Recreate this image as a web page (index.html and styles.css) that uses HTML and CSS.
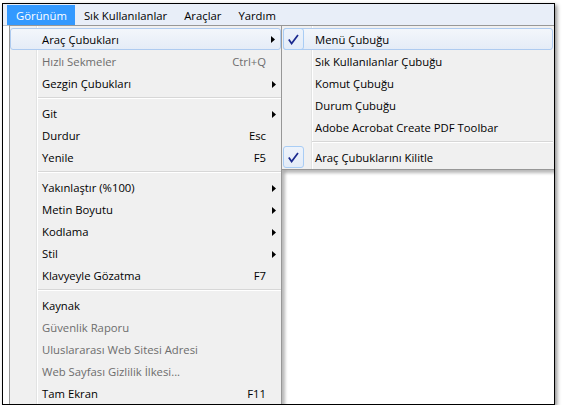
FILE: index.html
```html
<!DOCTYPE html>
<html lang="tr">
<head>
<meta charset="utf-8">
<title>Görünüm menüsü</title>
<link rel="stylesheet" href="styles.css">
</head>
<body>
<div class="window">
  <div class="menubar">
    <span class="mb-item active">Görünüm</span>
    <span class="mb-item">Sık Kullanılanlar</span>
    <span class="mb-item">Araçlar</span>
    <span class="mb-item">Yardım</span>
  </div>
  <div class="page"></div>

  <div class="menu main-menu">
    <div class="item hot"><span class="label">Araç Çubukları</span><span class="key"></span><span class="sub"><svg width="4" height="7" viewBox="0 0 4 7"><path d="M0 0L4 3.5L0 7Z"/></svg></span></div>
    <div class="item disabled"><span class="label">Hızlı Sekmeler</span><span class="key">Ctrl+Q</span><span class="sub"></span></div>
    <div class="item"><span class="label">Gezgin Çubukları</span><span class="key"></span><span class="sub"><svg width="4" height="7" viewBox="0 0 4 7"><path d="M0 0L4 3.5L0 7Z"/></svg></span></div>
    <div class="sep"></div>
    <div class="item"><span class="label">Git</span><span class="key"></span><span class="sub"><svg width="4" height="7" viewBox="0 0 4 7"><path d="M0 0L4 3.5L0 7Z"/></svg></span></div>
    <div class="item"><span class="label">Durdur</span><span class="key">Esc</span><span class="sub"></span></div>
    <div class="item"><span class="label">Yenile</span><span class="key">F5</span><span class="sub"></span></div>
    <div class="sep"></div>
    <div class="item"><span class="label">Yakınlaştır (%100)</span><span class="key"></span><span class="sub"><svg width="4" height="7" viewBox="0 0 4 7"><path d="M0 0L4 3.5L0 7Z"/></svg></span></div>
    <div class="item"><span class="label">Metin Boyutu</span><span class="key"></span><span class="sub"><svg width="4" height="7" viewBox="0 0 4 7"><path d="M0 0L4 3.5L0 7Z"/></svg></span></div>
    <div class="item"><span class="label">Kodlama</span><span class="key"></span><span class="sub"><svg width="4" height="7" viewBox="0 0 4 7"><path d="M0 0L4 3.5L0 7Z"/></svg></span></div>
    <div class="item"><span class="label">Stil</span><span class="key"></span><span class="sub"><svg width="4" height="7" viewBox="0 0 4 7"><path d="M0 0L4 3.5L0 7Z"/></svg></span></div>
    <div class="item"><span class="label">Klavyeyle Gözatma</span><span class="key">F7</span><span class="sub"></span></div>
    <div class="sep"></div>
    <div class="item"><span class="label">Kaynak</span><span class="key"></span><span class="sub"></span></div>
    <div class="item disabled"><span class="label">Güvenlik Raporu</span><span class="key"></span><span class="sub"></span></div>
    <div class="item disabled"><span class="label">Uluslararası Web Sitesi Adresi</span><span class="key"></span><span class="sub"></span></div>
    <div class="item disabled"><span class="label">Web Sayfası Gizlilik İlkesi...</span><span class="key"></span><span class="sub"></span></div>
    <div class="item"><span class="label">Tam Ekran</span><span class="key">F11</span><span class="sub"></span></div>
  </div>

  <div class="menu sub-menu">
    <div class="item hot"><span class="check"><svg width="11" height="11" viewBox="0 0 11 11"><path d="M0.8 5.6L3.6 9.6L10 0.9" fill="none" stroke="#1b2a8f" stroke-width="1.7" stroke-linejoin="miter"/></svg></span><span class="label">Menü Çubuğu</span></div>
    <div class="item"><span class="label">Sık Kullanılanlar Çubuğu</span></div>
    <div class="item"><span class="label">Komut Çubuğu</span></div>
    <div class="item"><span class="label">Durum Çubuğu</span></div>
    <div class="item"><span class="label">Adobe Acrobat Create PDF Toolbar</span></div>
    <div class="sep"></div>
    <div class="item"><span class="check"><svg width="11" height="11" viewBox="0 0 11 11"><path d="M0.8 5.6L3.6 9.6L10 0.9" fill="none" stroke="#1b2a8f" stroke-width="1.7" stroke-linejoin="miter"/></svg></span><span class="label">Araç Çubuklarını Kilitle</span></div>
  </div>
</div>
</body>
</html>
```

FILE: styles.css
```css
html, body {
  margin: 0;
  padding: 0;
  background: #ffffff;
}

body {
  font-family: "Open Sans", "Noto Sans", "DejaVu Sans", sans-serif;
  font-size: 11.3px;
  color: #000;
}

.window {
  position: relative;
  margin: 3px 0 0 2px;
  width: 551px;
  height: 400px;
  border: 1px solid #000;
  box-shadow: 2px 2px 4px rgba(0, 0, 0, 0.45);
  background: #fff;
  display: flex;
  flex-direction: column;
  overflow: hidden;
}

.menubar {
  display: flex;
  align-items: stretch;
  height: 20px;
  padding: 1px 0 0 4px;
  background: #e8eef8;
  border-bottom: 1px solid #bcc3cd;
}

.mb-item {
  display: flex;
  align-items: center;
  padding: 0 8px 0 9px;
  line-height: 19px;
}

.mb-item.active {
  background: #3399ff;
  color: #fff;
}

.page {
  flex: 1;
  background: #fff;
}

.menu {
  position: absolute;
  background-color: #f0f0f0;
  border: 1px solid #979797;
  box-shadow: 3px 3px 3px rgba(0, 0, 0, 0.28);
}

.main-menu {
  left: 6px;
  top: 21px;
  width: 271px;
  padding: 2px 0 20px;
  background-image: linear-gradient(to right, transparent 26px, #e2e3e3 26px, #e2e3e3 27px, #ffffff 27px, #ffffff 28px, transparent 28px);
}

.sub-menu {
  left: 278px;
  top: 21px;
  width: 272px;
  padding: 2px 0 1px;
  background-image: linear-gradient(to right, transparent 29px, #e2e3e3 29px, #e2e3e3 30px, #ffffff 30px, #ffffff 31px, transparent 31px);
}

.item {
  position: relative;
  display: flex;
  align-items: center;
  height: 22px;
  padding-top: 2px;
  line-height: 20px;
  box-sizing: border-box;
  white-space: nowrap;
}

.main-menu .item {
  padding-left: 32px;
}

.sub-menu .item {
  margin: 0 1px;
  padding-left: 32px;
}

.item.hot {
  background: linear-gradient(#f3f6fb, #e5ecf7);
  border: 1px solid #aecbf0;
  border-radius: 3px;
  padding-top: 1px;
}

.main-menu .item.hot {
  padding-left: 31px;
}

.sub-menu .item.hot {
  padding-left: 31px;
}

.item.disabled {
  color: #6d6d6d;
}

.label {
  flex: 1;
}

.key {
  margin-right: 1px;
}

.sub {
  width: 14px;
  flex: none;
  display: flex;
  align-items: center;
  padding-left: 5px;
  box-sizing: border-box;
}

.sub svg {
  display: block;
  fill: #000;
}

.check {
  position: absolute;
  left: 0;
  top: 0;
  width: 21px;
  height: 22px;
  box-sizing: border-box;
  border: 1px solid #a9cdf5;
  border-radius: 3px;
  background: linear-gradient(#edf3fb, #e3ecf8);
  display: flex;
  align-items: center;
  justify-content: center;
}

.item.hot .check {
  left: -1px;
  top: -1px;
}

.check svg {
  display: block;
}

.sep {
  height: 8px;
  box-sizing: border-box;
  padding-top: 3px;
}

.sep::before {
  content: "";
  display: block;
  height: 0;
  border-top: 1px solid #d7d7d7;
  border-bottom: 1px solid #ffffff;
}

.main-menu .sep {
  margin-left: 28px;
}

.sub-menu .sep {
  margin-left: 30px;
  margin-right: 1px;
}
```
